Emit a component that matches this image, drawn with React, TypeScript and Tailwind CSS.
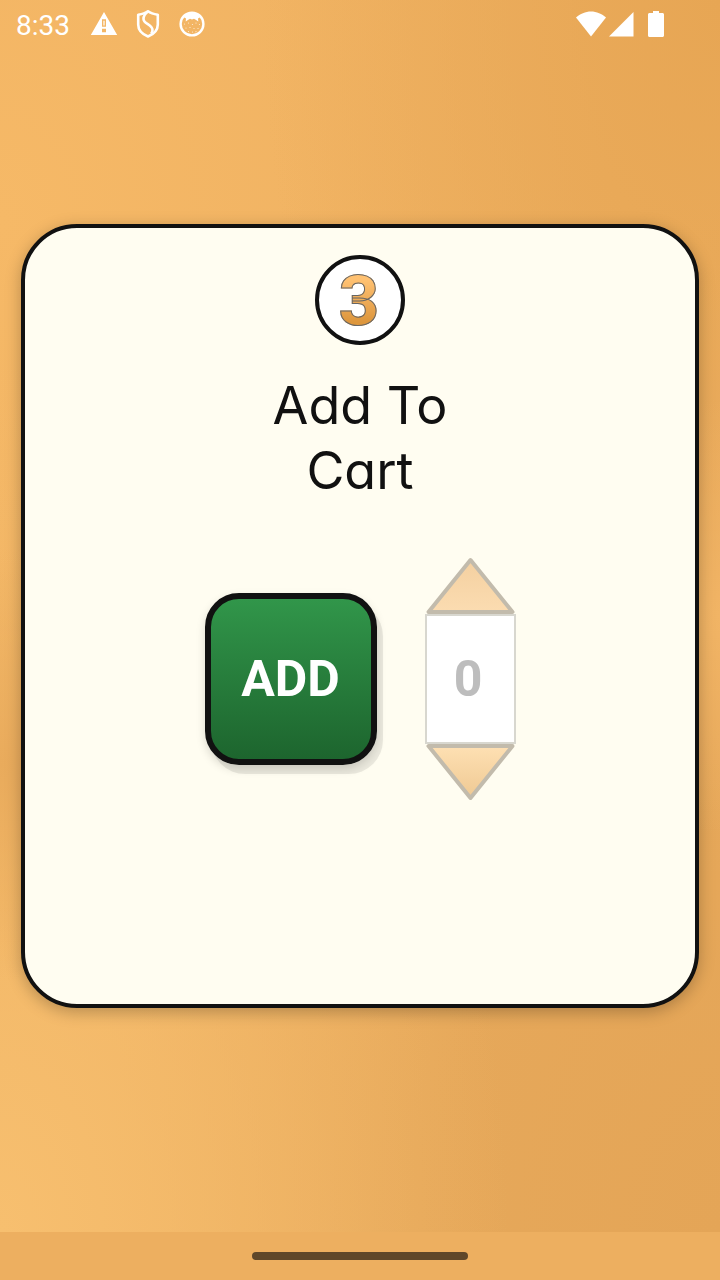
import { useState } from "react";

function WarningIcon() {
  return (
    <svg className="h-7 w-7" viewBox="0 0 28 28" aria-hidden="true">
      <path
        fill="#fff"
        fillRule="evenodd"
        d="M14 2 .8 25H27.200ZM12 9.300h4v7.500h-4Zm1.400 1.400v4.700h1.200v-4.700ZM12 18.700h4v3.600h-4Z"
      />
    </svg>
  );
}

function ShieldIcon() {
  return (
    <svg className="h-7 w-7" viewBox="0 0 28 28" fill="none" stroke="#fff" strokeWidth="2.600" strokeLinejoin="round" aria-hidden="true">
      <path d="M14 1.300C11.500 3.200 8 4.200 4.200 4.700v9.800c0 5.500 4.300 9.800 9.800 12 5.500-2.200 9.800-6.500 9.800-12V4.700C20 4.200 16.500 3.200 14 1.300Z" />
      <path d="M14 1.500C10.500 4 9.500 6.500 9.500 9c0 5 9 5.500 9 11 0 1.300-.5 2.500-1.300 3.700" />
    </svg>
  );
}

function CatIcon() {
  return (
    <svg className="h-7 w-7" viewBox="0 0 28 28" fill="none" aria-hidden="true">
      <circle cx="14" cy="14" r="11.400" stroke="#fff" strokeWidth="2.400" />
      <path
        fill="#fff"
        d="M5.500 7 9 3.500 14 2l5 1.500L22.500 7 20 8.500l.3 3-2.600-1.700L16 8.800l-2 .8-2-.8-1.700 1L7.700 11.500l.3-3Z"
      />
      <g fill="#fff" opacity=".75">
        <circle cx="6.500" cy="14" r=".6" />
        <circle cx="10.500" cy="13" r=".6" />
        <circle cx="14.500" cy="14.500" r=".6" />
        <circle cx="18" cy="13" r=".6" />
        <circle cx="21.500" cy="14.500" r=".6" />
        <circle cx="8" cy="18" r=".6" />
        <circle cx="12" cy="17.500" r=".6" />
        <circle cx="16" cy="18.500" r=".6" />
        <circle cx="20" cy="18.500" r=".6" />
        <circle cx="10.500" cy="21.500" r=".6" />
        <circle cx="14.500" cy="22" r=".6" />
        <circle cx="18" cy="21.700" r=".6" />
      </g>
    </svg>
  );
}

function StatusBar() {
  return (
    <header className="flex h-12 items-center justify-between pr-14 pl-4 text-white">
      <div className="flex items-center gap-4">
        <time className="w-[58px] pt-1 font-['Roboto',sans-serif] text-[28px] leading-none">8:33</time>
        <WarningIcon />
        <ShieldIcon />
        <CatIcon />
      </div>
      <div className="flex items-center">
        <svg className="h-7 w-8" viewBox="0 0 32 28" fill="#fff" aria-hidden="true">
          <path d="M15 26.500 0 7.500C4 4 9.500 1.500 15 1.500S26 4 30 7.500Z" />
        </svg>
        <svg className="h-7 w-7" viewBox="0 0 28 28" fill="#fff" aria-hidden="true">
          <path d="M25.500 2v24.500H1Z" />
        </svg>
        <svg className="ml-3 h-7 w-4" viewBox="0 0 16 28" fill="#fff" aria-hidden="true">
          <path d="M5 1h6v2h3.500c.8 0 1.500.7 1.500 1.500v21c0 .8-.7 1.500-1.500 1.500h-13C.7 27 0 26.300 0 25.500v-21C0 3.700.7 3 1.500 3H5Z" />
        </svg>
      </div>
    </header>
  );
}

function Triangle({ down = false }: { down?: boolean }) {
  const id = down ? "fill-down" : "fill-up";
  return (
    <svg className="block h-[57px] w-[91px]" viewBox="0 0 91 57" aria-hidden="true">
      <defs>
        <linearGradient id={id} x1="0" y1="0" x2="0" y2="1">
          <stop offset="0" stopColor={down ? "#fee0b3" : "#f4d0a0"} />
          <stop offset="1" stopColor={down ? "#efc993" : "#fbdcb1"} />
        </linearGradient>
      </defs>
      <path
        d={down ? "M3.500 2H87.500L45.500 54Z" : "M45.500 3 87.500 55H3.500Z"}
        fill={`url(#${id})`}
        stroke="#c2bbac"
        strokeWidth="4"
        strokeLinejoin="round"
      />
    </svg>
  );
}

export default function App() {
  const [quantity, setQuantity] = useState(0);

  return (
    <div className="flex min-h-screen flex-col bg-[#edaf60]">
      <div className="flex flex-1 flex-col bg-[radial-gradient(ellipse_at_0%_62%,#e9ab5c_0%,#e9ab5c00_20%),radial-gradient(ellipse_at_0%_100%,#f7bf6f_0%,#f7bf6f00_50%),radial-gradient(ellipse_at_100%_50%,#f1b465_0%,#f1b46500_25%),radial-gradient(ellipse_at_100%_100%,#e4a557_0%,#e6a85a_30%,#e6a85a00_60%),radial-gradient(ellipse_at_100%_0%,#e7a654_0%,#e7a65400_45%),radial-gradient(ellipse_at_0%_18%,#f6b967_0%,#f6b96700_60%)]">
        <StatusBar />
        <main className="flex flex-1 flex-col px-[21px] pt-44 pb-56">
          <section className="flex flex-1 flex-col items-center rounded-[56px] border-4 border-[#111] bg-[#fffdf1] pt-[27px] shadow-[0_4px_16px_rgba(0,0,0,0.25)]">
            <div className="flex h-[90px] w-[90px] items-center justify-center rounded-full border-4 border-[#111] bg-white pt-0.5">
              <span className="bg-linear-to-b from-[#ffc171] from-20% to-[#dd963c] to-80% bg-clip-text pr-0.5 font-['Roboto',sans-serif] text-[70px] leading-none font-extrabold text-transparent [-webkit-text-stroke:1px_#666]">
                3
              </span>
            </div>
            <h1 className="mt-7 w-52 text-center font-['Inter',sans-serif] text-[52px] leading-[65px] font-normal text-[#111] [font-feature-settings:'cv11']">
              Add To Cart
            </h1>
            <div className="mt-[54px] flex items-center gap-12">
              <button
                type="button"
                onClick={() => setQuantity(quantity + 1)}
                className="h-[172px] w-[172px] rounded-[34px] border-[6px] border-[#111] bg-linear-to-b from-[#31964a] to-[#1d652e] font-['Roboto',sans-serif] text-[50px] leading-none font-bold text-white shadow-[6px_9px_0_rgba(0,0,0,0.08),0_4px_10px_rgba(0,0,0,0.15)]"
              >
                ADD
              </button>
              <div className="flex flex-col items-center">
                <button type="button" aria-label="Increase quantity" disabled>
                  <Triangle />
                </button>
                <input
                  type="text"
                  aria-label="Quantity"
                  readOnly
                  value={quantity}
                  className="h-[130px] w-[91px] border-2 border-[#d8d7cf] bg-white pr-1 text-center font-['Roboto',sans-serif] text-[50px] font-bold text-[#bdbdbd]"
                />
                <button type="button" aria-label="Decrease quantity" disabled>
                  <Triangle down />
                </button>
              </div>
            </div>
          </section>
        </main>
      </div>
      <footer className="flex h-12 items-center justify-center">
        <div className="h-2 w-[30%] rounded-full bg-[#5f472a]" />
      </footer>
    </div>
  );
}
